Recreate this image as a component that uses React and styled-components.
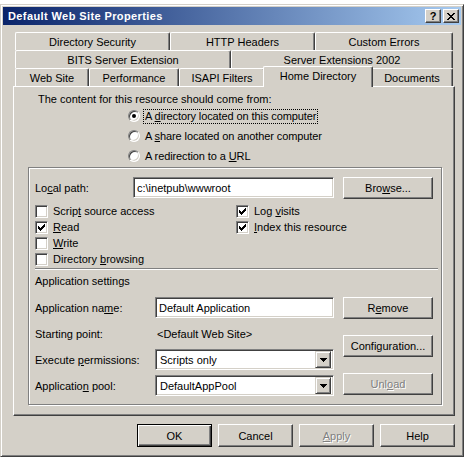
import React from "react";
import styled, { createGlobalStyle, css } from "styled-components";

const GlobalStyle = createGlobalStyle`
  html, body {
    margin: 0;
    padding: 0;
    background: #ffffff;
  }
  body {
    font-family: "Liberation Sans", Arial, sans-serif;
    font-size: 11px;
    color: #000;
  }
`;

const raised = css`
  border: 1px solid;
  border-color: #ffffff #404040 #404040 #ffffff;
  box-shadow: inset -1px -1px 0 #808080;
`;

const sunken = css`
  border: 1px solid;
  border-color: #808080 #ffffff #ffffff #808080;
  box-shadow: inset 1px 1px 0 #404040, inset -1px -1px 0 #d4d0c8;
`;

const Window = styled.div`
  box-sizing: border-box;
  width: 464px;
  height: 453px;
  margin-top: 4px;
  padding: 2px;
  background: #d4d0c8;
  border: 1px solid;
  border-color: #d4d0c8 #404040 #404040 #d4d0c8;
  box-shadow: inset 1px 1px 0 #ffffff, inset -1px -1px 0 #808080;
  display: flex;
  flex-direction: column;
`;

const TitleBar = styled.div`
  height: 18px;
  display: flex;
  align-items: center;
  justify-content: space-between;
  padding: 0 2px 0 5px;
  background: linear-gradient(to right, #0a246a, #a6caf0);
`;

const TitleText = styled.span`
  color: #ffffff;
  font-weight: bold;
  font-size: 11px;
  letter-spacing: 0.4px;
`;

const CaptionButtons = styled.div`
  display: flex;
  gap: 2px;
`;

const CaptionButton = styled.div`
  box-sizing: border-box;
  width: 16px;
  height: 14px;
  background: #d4d0c8;
  border: 1px solid;
  border-color: #ffffff #404040 #404040 #ffffff;
  box-shadow: inset -1px -1px 0 #808080;
  display: flex;
  align-items: center;
  justify-content: center;
  font-weight: bold;
  font-size: 11px;
  line-height: 1;
`;

const Client = styled.div`
  padding: 7px 0 0 10px;
  display: flex;
  flex-direction: column;
`;

const TabStrip = styled.div`
  width: 442px;
  display: flex;
  flex-direction: column;
`;

const TabRow = styled.div`
  display: flex;
  align-items: flex-end;
  height: 18px;
  padding: 0 2px;
`;

const Tab = styled.div`
  box-sizing: border-box;
  flex: none;
  width: ${(p) => p.$w}px;
  height: 18px;
  background: #d4d0c8;
  border-top: 1px solid #ffffff;
  border-left: 1px solid #ffffff;
  border-right: 1px solid #404040;
  border-radius: 2px 2px 0 0;
  box-shadow: inset -1px 0 0 #808080;
  display: flex;
  align-items: center;
  justify-content: center;
  white-space: nowrap;
  ${(p) =>
    p.$active &&
    css`
      position: relative;
      z-index: 2;
      width: ${p.$w + 4}px;
      height: 21px;
      margin: 0 -2px -1px;
      padding-bottom: 3px;
    `}
`;

const Panel = styled.div`
  box-sizing: border-box;
  width: 442px;
  height: 330px;
  background: #d4d0c8;
  border: 1px solid;
  border-color: #ffffff #404040 #404040 #ffffff;
  box-shadow: inset -1px -1px 0 #808080;
  display: flex;
  flex-direction: column;
`;

const Prompt = styled.div`
  margin: 5px 0 0 24px;
  line-height: 14px;
`;

const RadioList = styled.div`
  margin-left: 114px;
  display: flex;
  flex-direction: column;
`;

const RadioRow = styled.div`
  height: 20px;
  display: flex;
  align-items: center;
  gap: 4px;
`;

const RadioDot = styled.span`
  box-sizing: border-box;
  width: 12px;
  height: 12px;
  border-radius: 50%;
  background: #ffffff;
  border: 1px solid;
  border-color: #808080 #ffffff #ffffff #808080;
  box-shadow: inset 1px 1px 0 #404040, inset -1px -1px 0 #d4d0c8;
  display: flex;
  align-items: center;
  justify-content: center;
  &::after {
    content: "";
    width: 4px;
    height: 4px;
    border-radius: 50%;
    background: ${(p) => (p.$on ? "#000" : "transparent")};
  }
`;

const RadioLabel = styled.span`
  padding: 0 1px;
  line-height: 13px;
  letter-spacing: -0.1px;
  outline: ${(p) => (p.$focus ? "1px dotted #000" : "none")};
`;

const GroupBox = styled.div`
  box-sizing: border-box;
  width: 414px;
  height: 238px;
  margin: 1px 0 0 14px;
  border: 1px solid #808080;
  box-shadow: 1px 1px 0 #ffffff, inset 1px 1px 0 #ffffff;
  padding: 9px 0 0 6px;
  display: flex;
  flex-direction: column;
`;

const FieldRow = styled.div`
  display: flex;
  align-items: center;
  height: 21px;
`;

const FieldLabel = styled.span`
  flex: none;
  width: ${(p) => p.$w}px;
`;

const TextBox = styled.div`
  box-sizing: border-box;
  flex: none;
  width: ${(p) => p.$w}px;
  height: 21px;
  background: #ffffff;
  ${sunken};
  display: flex;
  align-items: center;
  padding-left: 3px;
  white-space: nowrap;
`;

const SelectBox = styled(TextBox)`
  padding: 2px 2px 2px 4px;
  justify-content: space-between;
`;

const DropButton = styled.span`
  box-sizing: border-box;
  width: 16px;
  height: 17px;
  background: #d4d0c8;
  border: 1px solid;
  border-color: #d4d0c8 #404040 #404040 #d4d0c8;
  box-shadow: inset 1px 1px 0 #ffffff, inset -1px -1px 0 #808080;
  display: flex;
  align-items: center;
  justify-content: center;
`;

const Button = styled.div`
  box-sizing: border-box;
  flex: none;
  width: ${(p) => p.$w || 75}px;
  height: ${(p) => p.$h || 23}px;
  margin-left: ${(p) => p.$ml || 0}px;
  background: #d4d0c8;
  ${raised};
  display: flex;
  align-items: center;
  justify-content: center;
  color: ${(p) => (p.$disabled ? "#808080" : "#000")};
  text-shadow: ${(p) => (p.$disabled ? "1px 1px 0 #ffffff" : "none")};
  ${(p) =>
    p.$default &&
    css`
      border: 1px solid #000;
      box-shadow: inset 1px 1px 0 #ffffff, inset -1px -1px 0 #404040,
        inset -2px -2px 0 #808080;
    `}
`;

const CheckArea = styled.div`
  display: flex;
  margin-top: 5px;
`;

const CheckCol = styled.div`
  width: ${(p) => p.$w}px;
  display: flex;
  flex-direction: column;
`;

const CheckRow = styled.div`
  height: 16px;
  display: flex;
  align-items: center;
  gap: 5px;
`;

const CheckBox = styled.span`
  box-sizing: border-box;
  width: 13px;
  height: 13px;
  background: #ffffff;
  border: 1px solid;
  border-color: #808080 #ffffff #ffffff #808080;
  box-shadow: inset 1px 1px 0 #404040, inset -1px -1px 0 #d4d0c8;
  display: flex;
  align-items: center;
  justify-content: center;
`;

const Separator = styled.div`
  width: 403px;
  height: 0;
  margin-top: 1px;
  border-top: 1px solid #808080;
  border-bottom: 1px solid #ffffff;
`;

const SectionTitle = styled.div`
  margin-top: 4px;
  line-height: 14px;
`;

const AppSettings = styled.div`
  display: flex;
  margin-top: 9px;
`;

const AppFields = styled.div`
  display: flex;
  flex-direction: column;
  gap: 5px;
`;

const AppButtons = styled.div`
  display: flex;
  flex-direction: column;
  gap: 16px;
  margin-left: 9px;
`;

const StaticValue = styled.span`
  padding-left: 2px;
`;

const ButtonBar = styled.div`
  width: 442px;
  display: flex;
  justify-content: flex-end;
  gap: 6px;
  margin-top: 8px;
`;

const CHECK = [
  "......X",
  ".....XX",
  "X...XXX",
  "XX.XXX.",
  "XXXXX..",
  ".XXX...",
  "..X....",
];

const CheckMark = () => (
  <svg width="7" height="7" viewBox="0 0 7 7" shapeRendering="crispEdges">
    {CHECK.flatMap((row, y) =>
      row.split("").map((c, x) =>
        c === "X" ? <rect key={`${x}-${y}`} x={x} y={y} width="1" height="1" fill="#000" /> : null
      )
    )}
  </svg>
);

const DownArrow = () => (
  <svg width="7" height="4" viewBox="0 0 7 4" shapeRendering="crispEdges">
    <path d="M0 0h7v1H0zM1 1h5v1H1zM2 2h3v1H2zM3 3h1v1H3z" fill="#000" />
  </svg>
);

const CloseGlyph = () => (
  <svg width="8" height="7" viewBox="0 0 8 7" shapeRendering="crispEdges">
    <path
      d="M0 0h2v1H0zM6 0h2v1H6zM1 1h2v1H1zM5 1h2v1H5zM2 2h4v1H2zM3 3h2v1H3zM2 4h4v1H2zM1 5h2v1H1zM5 5h2v1H5zM0 6h2v1H0zM6 6h2v1H6z"
      fill="#000"
    />
  </svg>
);

const Check = ({ on, children }) => (
  <CheckRow>
    <CheckBox>{on && <CheckMark />}</CheckBox>
    <span>{children}</span>
  </CheckRow>
);

const Select = ({ value }) => (
  <SelectBox $w={179}>
    <span>{value}</span>
    <DropButton>
      <DownArrow />
    </DropButton>
  </SelectBox>
);

export default function App() {
  return (
    <>
      <GlobalStyle />
      <Window>
        <TitleBar>
          <TitleText>Default Web Site Properties</TitleText>
          <CaptionButtons>
            <CaptionButton>?</CaptionButton>
            <CaptionButton>
              <CloseGlyph />
            </CaptionButton>
          </CaptionButtons>
        </TitleBar>

        <Client>
          <TabStrip>
            <TabRow>
              <Tab $w={155}>Directory Security</Tab>
              <Tab $w={145}>HTTP Headers</Tab>
              <Tab $w={138}>Custom Errors</Tab>
            </TabRow>
            <TabRow>
              <Tab $w={216}>BITS Server Extension</Tab>
              <Tab $w={222}>Server Extensions 2002</Tab>
            </TabRow>
            <TabRow>
              <Tab $w={74}>Web Site</Tab>
              <Tab $w={90}>Performance</Tab>
              <Tab $w={86}>ISAPI Filters</Tab>
              <Tab $w={106} $active>
                Home Directory
              </Tab>
              <Tab $w={82}>Documents</Tab>
            </TabRow>
          </TabStrip>

          <Panel>
            <Prompt>The content for this resource should come from:</Prompt>
            <RadioList>
              <RadioRow>
                <RadioDot $on />
                <RadioLabel $focus>
                  A <u>d</u>irectory located on this computer
                </RadioLabel>
              </RadioRow>
              <RadioRow>
                <RadioDot />
                <RadioLabel>
                  A <u>s</u>hare located on another computer
                </RadioLabel>
              </RadioRow>
              <RadioRow>
                <RadioDot />
                <RadioLabel>
                  A redirection to a <u>U</u>RL
                </RadioLabel>
              </RadioRow>
            </RadioList>

            <GroupBox>
              <FieldRow>
                <FieldLabel $w={98}>
                  Lo<u>c</u>al path:
                </FieldLabel>
                <TextBox $w={201}>c:\inetpub\wwwroot</TextBox>
                <Button $w={90} $h={22} $ml={9}>
                  Bro<u>w</u>se...
                </Button>
              </FieldRow>

              <CheckArea>
                <CheckCol $w={201}>
                  <Check>
                    Scrip<u>t</u> source access
                  </Check>
                  <Check on>
                    <u>R</u>ead
                  </Check>
                  <Check>
                    <u>W</u>rite
                  </Check>
                  <Check>
                    Directory <u>b</u>rowsing
                  </Check>
                </CheckCol>
                <CheckCol $w={200}>
                  <Check on>
                    Log <u>v</u>isits
                  </Check>
                  <Check on>
                    <u>I</u>ndex this resource
                  </Check>
                </CheckCol>
              </CheckArea>

              <Separator />
              <SectionTitle>Application settings</SectionTitle>

              <AppSettings>
                <AppFields>
                  <FieldRow>
                    <FieldLabel $w={120}>
                      Application na<u>m</u>e:
                    </FieldLabel>
                    <TextBox $w={179}>Default Application</TextBox>
                  </FieldRow>
                  <FieldRow>
                    <FieldLabel $w={120}>Starting point:</FieldLabel>
                    <StaticValue>&lt;Default Web Site&gt;</StaticValue>
                  </FieldRow>
                  <FieldRow>
                    <FieldLabel $w={120}>
                      Execute <u>p</u>ermissions:
                    </FieldLabel>
                    <Select value="Scripts only" />
                  </FieldRow>
                  <FieldRow>
                    <FieldLabel $w={120}>
                      Applicatio<u>n</u> pool:
                    </FieldLabel>
                    <Select value="DefaultAppPool" />
                  </FieldRow>
                </AppFields>
                <AppButtons>
                  <Button $w={90} $h={22}>
                    R<u>e</u>move
                  </Button>
                  <Button $w={90} $h={22}>
                    Configuration...
                  </Button>
                  <Button $w={90} $h={22} $disabled>
                    Unl<u>o</u>ad
                  </Button>
                </AppButtons>
              </AppSettings>
            </GroupBox>
          </Panel>

          <ButtonBar>
            <Button $default>OK</Button>
            <Button>Cancel</Button>
            <Button $disabled>
              <u>A</u>pply
            </Button>
            <Button>Help</Button>
          </ButtonBar>
        </Client>
      </Window>
    </>
  );
}
